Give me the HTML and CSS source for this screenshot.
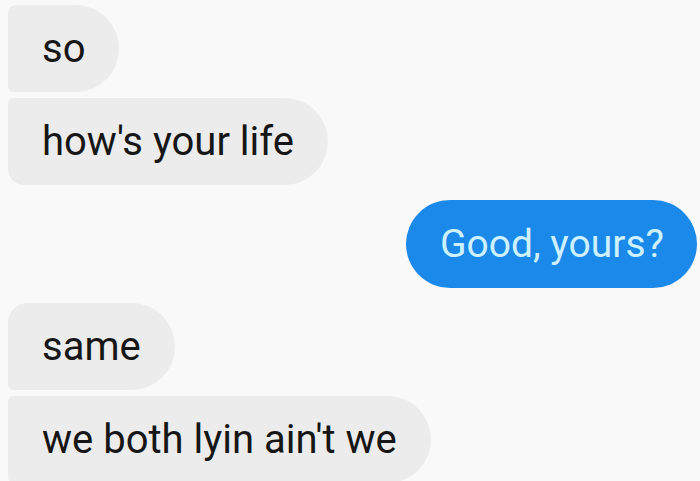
FILE: index.html
```html
<!DOCTYPE html>
<html>
<head>
<meta charset="utf-8">
<link rel="stylesheet" href="styles.css">
</head>
<body>
<div class="chat">
  <div class="row in"><div class="bubble gray b-so">so</div></div>
  <div class="row in"><div class="bubble gray b-how">how's your life</div></div>
  <div class="row out gap-lg"><div class="bubble blue">Good, yours?</div></div>
  <div class="row in gap-lg"><div class="bubble gray b-same">same</div></div>
  <div class="row in"><div class="bubble gray b-lie">we both lyin ain't we</div></div>
</div>
</body>
</html>
```
FILE: styles.css
```css
html, body {
  margin: 0;
  padding: 0;
  background: #f9f9f9;
  overflow: hidden;
}
.chat {
  display: flex;
  flex-direction: column;
  gap: 6px;
  padding: 5px 3px 0 8px;
  font-family: Roboto, "Liberation Sans", sans-serif;
}
.row {
  display: flex;
}
.row.out {
  justify-content: flex-end;
}
.gap-lg {
  margin-top: 9px;
}
.bubble {
  height: 87px;
  display: flex;
  align-items: center;
  padding: 0 34px;
  font-size: 40px;
  border-radius: 44px;
  white-space: nowrap;
  box-sizing: border-box;
}
.gray {
  background: #ececec;
  color: #161616;
}
.blue {
  background: #1a89ea;
  color: #cdf1ff;
  height: 88px;
  font-size: 39px;
  padding: 0 33px 0 34px;
}
.b-so {
  border-radius: 8px 44px 44px 6px;
}
.b-how {
  border-radius: 6px 44px 44px 16px;
}
.b-same {
  border-radius: 20px 44px 44px 6px;
}
.b-lie {
  border-radius: 6px 44px 44px 6px;
}
```
